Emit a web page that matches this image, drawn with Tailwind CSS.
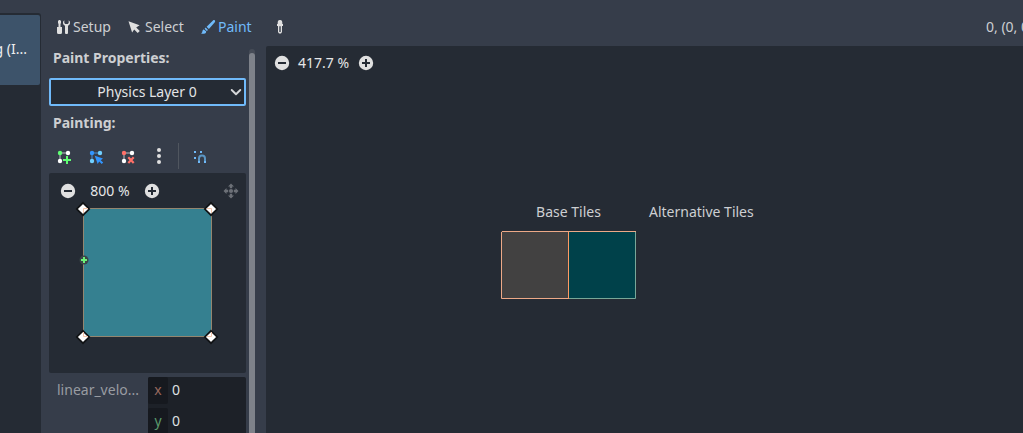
<!DOCTYPE html>
<html lang="en">
<head>
<meta charset="utf-8">
<title>TileSet editor</title>
<script src="https://cdn.jsdelivr.net/npm/@tailwindcss/browser@4"></script>
</head>
<body class="h-[433px] w-[1023px] overflow-hidden bg-[#363d4a] font-['Noto_Sans',sans-serif] text-[14px] leading-5 text-[#cdcfd2]">
<div class="flex h-full">
  <!-- Source list -->
  <aside class="h-full w-[41px] shrink-0 pt-[13px]">
    <div class="h-full overflow-hidden rounded-tr-[3px] bg-[#252b34] pt-[2px] pr-px">
      <div class="flex h-[70px] items-center justify-end rounded-r-[2px] bg-[#3d536a] pr-[13px] pb-[2px] whitespace-nowrap text-[#eeeff0]">g (I...</div>
    </div>
  </aside>

  <div class="flex min-w-0 grow flex-col">
    <!-- Toolbar -->
    <header class="flex h-[46px] shrink-0 items-center pt-[8px] pl-[14px]">
      <svg class="mr-[2px] size-4 shrink-0" viewBox="0 0 16 16" fill="#e0e0e0"><path d="M4 1 3 2v2l.5 1v3H2v5.500A1.500 1.500 0 0 0 3.500 15h2A1.500 1.500 0 0 0 7 13.500V8H5.500V5L6 4V2L5 1z"/><path d="M9.300 1.200A3.200 3.200 0 0 0 10 6.800V14a1 1 0 0 0 1 1h1a1 1 0 0 0 1-1V6.800a3.200 3.200 0 0 0 .7-5.600V4l-1 1h-2.400l-1-1z"/></svg>
      <span class="w-[54px]">Setup</span>
      <svg class="mr-[2px] size-4 shrink-0" viewBox="0 0 16 16" fill="#e0e0e0"><path d="m1.500 2.200 3.600 11.300 2.100-3.100 3.500 3.600 2.100-2.100-3.600-3.400 3.400-2.300z"/></svg>
      <span class="w-[55px]">Select</span>
      <svg class="mr-[2px] size-4 shrink-0" viewBox="0 0 16 16" fill="#70bafa"><path d="M14.700 1.200c-.6-.4-1.200-.2-1.700.2L6.600 7.700l2.300 2.300 5.900-6.700c.5-.7.500-1.500-.1-2.100zM5.700 8.600 4.600 9.800l2.200 2.200 1.200-1.100zM3.700 10.400c-1.100.3-1.300 1.500-1.400 2.300-.1.700-.5 1.300-1.300 1.500 1.300 1 4.100 1 5-.8.200-.4.200-.9.100-1.200z"/></svg>
      <span class="w-[54px] text-[#70bafa]">Paint</span>
      <svg class="size-4 shrink-0" viewBox="0 0 16 16"><path d="M7.500 1A2.300 2.300 0 0 0 5.700 3.500V5H5v2h1v6l1 1.500h2L10 13V7h1V5h-.7V3.500A2.300 2.300 0 0 0 8.500 1z" fill="#e0e0e0"/><path d="M7.300 7.300h1.400V13H7.300z" fill="#363d4a"/></svg>
      <span class="-mt-px ml-auto w-[37px] overflow-hidden whitespace-nowrap">0, (0, 0)</span>
    </header>

    <div class="flex min-h-0 grow">
      <!-- Painting properties -->
      <section class="flex w-[225px] shrink-0">
        <div class="ml-2 flex w-[197px] flex-col">
          <h2 class="mt-[2px] h-5 pl-1 font-bold">Paint Properties:</h2>
          <div class="mt-[10px] flex h-7 shrink-0 items-center rounded-[2px] border-2 border-[#70bafa] bg-[#252b34] pr-[2px] text-[#e3e4e6]">
            <span class="grow pl-[13px] text-center">Physics Layer 0</span>
            <svg class="size-3" viewBox="0 0 12 12" fill="none" stroke="#d5d7d9" stroke-width="1.900" stroke-linecap="round" stroke-linejoin="round"><path d="m1.700 4 4.300 4.200L10.300 4"/></svg>
          </div>
          <h2 class="mt-[7px] h-5 pl-1 font-bold">Painting:</h2>
          <div class="mt-[10px] flex h-[26px] shrink-0 items-center pl-[7px]">
            <svg class="mt-[2px] size-4" viewBox="0 0 16 16"><path d="M4 12V4h8" fill="none" stroke="#787d86" stroke-width="2"/><circle cx="4" cy="4" r="2.200" fill="#5fff73"/><circle cx="12" cy="4" r="2.200" fill="#fff"/><circle cx="4" cy="12" r="2.200" fill="#fff"/><path d="M10 7h2v3h3v2h-3v3h-2v-3H7v-2h3z" fill="#5fff73"/></svg>
            <svg class="mt-[2px] ml-4 size-4" viewBox="0 0 16 16"><path d="M4 12V4h8" fill="none" stroke="#3f6690" stroke-width="2"/><circle cx="4" cy="4" r="2.200" fill="#3295ff"/><circle cx="12" cy="4" r="2.200" fill="#70cfff"/><circle cx="4" cy="12" r="2.200" fill="#70cfff"/><path d="m6.700 6.700 3 8.300 1.500-2.500 2.500 2.500 1.500-1.500-2.500-2.300L15 9.600z" fill="#3295ff"/></svg>
            <svg class="mt-[2px] ml-4 size-4" viewBox="0 0 16 16"><path d="M4 12V4h8" fill="none" stroke="#787d86" stroke-width="2"/><circle cx="4" cy="4" r="2.200" fill="#ff7068"/><circle cx="12" cy="4" r="2.200" fill="#fff"/><circle cx="4" cy="12" r="2.200" fill="#fff"/><path d="m8.300 8.300 5.400 5.700m0-5.700L8.300 14" fill="none" stroke="#ff7068" stroke-width="2.200"/></svg>
            <svg class="ml-[15px] size-4" viewBox="0 0 16 16" fill="#e0e0e0"><circle cx="8" cy="2" r="2"/><circle cx="8" cy="8" r="2"/><circle cx="8" cy="14" r="2"/></svg>
            <div class="ml-[11px] h-[26px] w-px bg-[#50565f]"></div>
            <svg class="mt-[2px] ml-[13px] size-4" viewBox="0 0 16 16"><path d="M2 2h2v2H2zM8 2h2v2H8zM2 8h2v2H2z" fill="#70bafa"/><path d="M7 12V9.500a3 3 0 0 1 6 0V12" fill="none" stroke="#5b96c4" stroke-width="2"/><path d="M6 12h2v2H6zM12 12h2v2h-2z" fill="#70bafa"/></svg>
          </div>
          <!-- Polygon editor -->
          <div class="mt-[4px] flex h-[200px] shrink-0 flex-col rounded-[2px] bg-[#252b34] pt-[10px]">
            <div class="flex h-4 shrink-0 items-center pl-[11px] text-[#e6e7e8]">
              <svg class="size-4" viewBox="0 0 16 16"><circle cx="8" cy="8" r="7.200" fill="#e0e0e0"/><path d="M4 7h8v2H4z" fill="#252b34"/></svg>
              <span class="w-[68px] text-center">800 %</span>
              <svg class="size-4" viewBox="0 0 16 16"><circle cx="8" cy="8" r="7.200" fill="#e0e0e0"/><path d="M7 4h2v3h3v2H9v3H7V9H4V7h3z" fill="#252b34"/></svg>
              <svg class="ml-[63px] size-4" viewBox="0 0 16 16" fill="#6c7077"><circle cx="8" cy="8" r="2.100"/><path d="M8 .5 11 3.500H9.200V5.200H6.800V3.500H5zM8 15.500l3-3H9.200v-1.700H6.800v1.700H5zM.5 8l3-3v1.800h1.700v2.400H3.500V11zM15.500 8l-3-3v1.800h-1.700v2.400h1.700V11z"/></svg>
            </div>
            <svg class="mt-[2px] ml-[24px] h-[150px] w-[146px]" viewBox="0 0 146 150">
              <path d="M10.500 7.500h128v128h-128z" fill="#358090" stroke="#94866f"/>
              <g fill="#fff" stroke="#101214" stroke-width="1.700"><path id="handle" d="m10 1.800 6.200 6.200-6.200 6.200L3.800 8z"/><use href="#handle" x="128"/><use href="#handle" y="128"/><use href="#handle" x="128" y="128"/></g>
              <path d="M10.500 12V7.500H15M134 7.500h4.500V12M10.500 131v4.500H15M134 135.500h4.500V131" fill="none" stroke="#f8c8ad"/>
              <circle cx="11" cy="59" r="4.500" fill="#3a4547"/>
              <path d="M10 56h2v2h2v2h-2v2h-2v-2H8v-2h2z" fill="#6cf178"/>
            </svg>
          </div>
          <!-- linear_velocity -->
          <div class="mt-[4px] flex h-[62px] shrink-0">
            <div class="w-[99px] pt-[3px] pl-2 text-[#999ca2]">linear_velo...</div>
            <div class="flex w-[98px] shrink-0 flex-col gap-[4px] rounded-[2px] bg-[#1d2128]">
              <div class="flex h-[27px]"><span class="h-full w-5 rounded-[2px] bg-[#16191f] pt-[3px] text-center text-[#96685e]">x</span><span class="pt-[3px] pl-1 text-[#dfe0e2]">0</span></div>
              <div class="flex h-[27px]"><span class="h-full w-5 rounded-[2px] bg-[#16191f] pt-[3px] text-center text-[#5a9a6c]">y</span><span class="pt-[3px] pl-1 text-[#dfe0e2]">0</span></div>
            </div>
          </div>
        </div>
        <div class="mt-[3px] ml-[3px] w-[6px] rounded-t-[3px] bg-[#464c57] pt-[4px]">
          <div class="h-full rounded-t-[3px] bg-[#7e828a]"></div>
        </div>
      </section>

      <!-- Atlas view -->
      <main class="min-w-0 grow rounded-tl-[2px] bg-[#252b34]">
        <div class="mt-[9px] flex h-4 items-center pl-2 text-[#e6e7e8]">
          <svg class="size-4" viewBox="0 0 16 16"><circle cx="8" cy="8" r="7.200" fill="#e0e0e0"/><path d="M4 7h8v2H4z" fill="#252b34"/></svg>
          <span class="w-[68px] pr-px text-center">417.7 %</span>
          <svg class="size-4" viewBox="0 0 16 16"><circle cx="8" cy="8" r="7.200" fill="#e0e0e0"/><path d="M7 4h2v3h3v2H9v3H7V9H4V7h3z" fill="#252b34"/></svg>
        </div>
        <div class="mt-[131px] flex gap-[13px] pl-[235px]">
          <div class="w-[135px]">
            <div class="h-5 text-center">Base Tiles</div>
            <svg class="mt-[9px] h-[68px] w-[135px]" viewBox="0 0 135 68" fill="none"><path d="M0 0h68v68H0z" fill="#424141"/><path d="M68 0h67v68H68z" fill="#00414a"/><path d="M67 67.500h67.500V1" stroke="#78a798"/><path d="M.5 1v66.500h67M1 .5h134" stroke="#eda987"/><path d="M67.500 1v67" stroke="#ff9a62"/></svg>
          </div>
          <div class="h-5 whitespace-nowrap">Alternative Tiles</div>
        </div>
      </main>
    </div>
  </div>
</div>
</body>
</html>
